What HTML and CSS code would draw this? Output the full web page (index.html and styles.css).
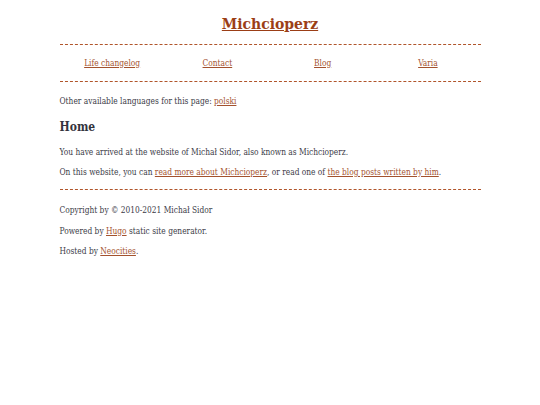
FILE: index.html
```html
<!DOCTYPE html>
<html lang="en">
<head>
<meta charset="utf-8">
<title>Michcioperz</title>
<link rel="stylesheet" href="styles.css">
</head>
<body>
<div class="page">
  <header class="site-header">
    <h1 class="site-title"><a href="#">Michcioperz</a></h1>
    <nav class="site-nav">
      <a href="#">Life changelog</a>
      <a href="#">Contact</a>
      <a href="#">Blog</a>
      <a href="#">Varia</a>
    </nav>
  </header>
  <main class="content">
    <p class="langs">Other available languages for this page: <a href="#">polski</a></p>
    <h2 class="page-title">Home</h2>
    <p class="para">You have arrived at the website of Michał Sidor, also known as Michcioperz.</p>
    <p class="para">On this website, you can <a href="#">read more about Michcioperz</a>, or read one of <a href="#">the blog posts written by him</a>.</p>
  </main>
  <footer class="site-footer">
    <p class="foot">Copyright by © 2010-2021 Michał Sidor</p>
    <p class="foot">Powered by <a href="#">Hugo</a> static site generator.</p>
    <p class="foot">Hosted by <a href="#">Neocities</a>.</p>
  </footer>
</div>
</body>
</html>
```

FILE: styles.css
```css
html, body {
  margin: 0;
  padding: 0;
  background: #ffffff;
}
body {
  font-family: "DejaVu Serif Condensed", "DejaVu Serif", serif;
  font-stretch: condensed;
  font-size: 8.3px;
  line-height: 12px;
  color: #3b3b47;
}
a {
  color: #a3522e;
}
.page {
  width: 421px;
  margin: 0 auto;
}
.site-header {
  padding-top: 13px;
}
.site-title {
  margin: 0 0 9px 0;
  font-size: 15.5px;
  line-height: 22px;
  text-align: center;
  font-weight: bold;
}
.site-title a {
  color: #9b3e16;
}
.site-nav {
  border-top: 1px dashed #b0552b;
  border-bottom: 1px dashed #b0552b;
  padding: 12px 0 12px 0;
  display: grid;
  grid-template-columns: repeat(4, 1fr);
  text-align: center;
}
.content {
  padding-top: 13px;
  padding-bottom: 11px;
  border-bottom: 1px dashed #b0552b;
}
.langs {
  margin: 0;
}
.page-title {
  margin: 12px 0 11px 0;
  font-size: 12px;
  line-height: 16px;
  font-weight: bold;
  color: #33333d;
}
.para {
  margin: 0 0 8px 0;
}
.para:last-child {
  margin-bottom: 0;
}
.site-footer {
  padding-top: 14px;
}
.foot {
  margin: 0 0 8.5px 0;
}
```
